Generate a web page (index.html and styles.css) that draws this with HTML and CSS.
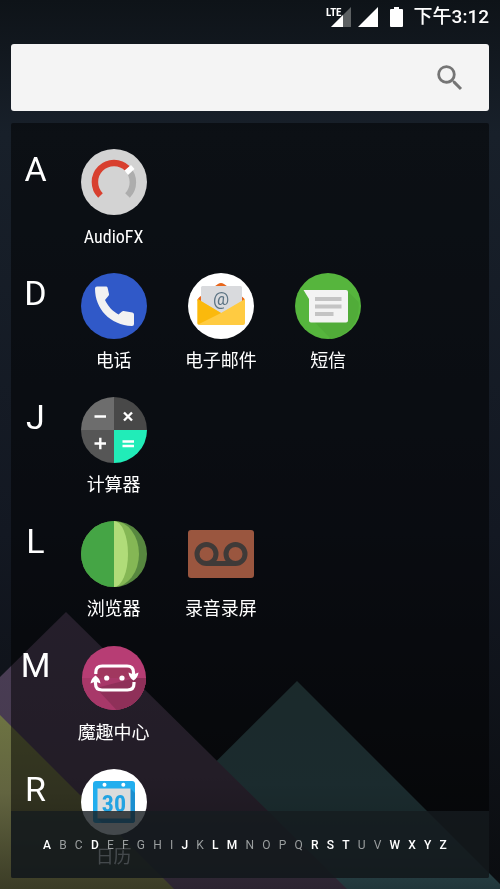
FILE: index.html
```
<!DOCTYPE html>
<html lang="zh-CN">
<head>
    <meta charset="UTF-8">
    <meta name="viewport" content="width=device-width, initial-scale=1">
    <title>应用列表</title>
    <link rel="stylesheet" href="styles.css">
</head>
<body>

<!-- 壁纸 -->
<svg class="wallpaper" viewBox="0 0 500 889" preserveAspectRatio="none" aria-hidden="true">
    <defs>
        <linearGradient id="sky" x1="0" y1="0" x2="0" y2="1">
            <stop offset="0" stop-color="#0e1318"/>
            <stop offset=".15" stop-color="#18202a"/>
            <stop offset=".6" stop-color="#131822"/>
            <stop offset="1" stop-color="#0b0d10"/>
        </linearGradient>
        <linearGradient id="teal" x1="0" y1="0" x2="0" y2="1">
            <stop offset="0" stop-color="#365457"/>
            <stop offset=".5" stop-color="#36565c"/>
            <stop offset=".8" stop-color="#2e4a4e"/>
            <stop offset="1" stop-color="#21363a"/>
        </linearGradient>
        <linearGradient id="purple" x1="0" y1="0" x2="0" y2="1">
            <stop offset="0" stop-color="#4a3d56"/>
            <stop offset=".6" stop-color="#463a4e"/>
            <stop offset="1" stop-color="#2c2431"/>
        </linearGradient>
        <linearGradient id="olive" x1="0" y1="0" x2="0" y2="1">
            <stop offset="0" stop-color="#6d7342"/>
            <stop offset=".45" stop-color="#626440"/>
            <stop offset="1" stop-color="#3b3c26"/>
        </linearGradient>
    </defs>
    <rect width="500" height="889" fill="url(#sky)"/>
    <path d="M297 681L88 889H505Z" fill="url(#teal)"/>
    <path d="M66 612L-5 682V889H347Z" fill="url(#purple)"/>
    <path d="M0 715V889H174Z" fill="url(#olive)"/>
</svg>

<header class="status-bar">
    <svg class="signal-lte" width="26" height="20" viewBox="0 0 26 20" role="img" aria-label="LTE 信号">
        <path d="M25 0V20H5Z" fill="#5d6163"/>
        <path d="M17 8V20H5Z" fill="#fff"/>
        <path d="M0 0H14V10H0Z" fill="#0f1419"/>
        <text x="0" y="9" class="lte-text">LTE</text>
    </svg>
    <svg class="signal" width="20" height="20" viewBox="0 0 20 20" role="img" aria-label="信号">
        <path d="M20 0V20H0Z" fill="#fff"/>
    </svg>
    <svg class="battery" width="13" height="20" viewBox="0 0 13 20" role="img" aria-label="电池">
        <path d="M4 0h5v2h3q1 0 1 1v16q0 1-1 1H1q-1 0-1-1V3q0-1 1-1h3z" fill="#fff"/>
    </svg>
    <time class="clock">下午3:12</time>
</header>

<form class="search" role="search">
    <input type="text" class="search-input" aria-label="搜索应用">
    <button type="button" class="search-button" aria-label="搜索">
        <svg width="34" height="34" viewBox="0 0 24 24" fill="#757575">
            <path d="M15.5 14h-.79l-.28-.27A6.47 6.47 0 0 0 16 9.5 6.5 6.5 0 1 0 9.500 16c1.610 0 3.090-.59 4.230-1.570l.27.28v.79l5 4.990L20.490 19l-4.990-5zm-6 0C7.010 14 5 11.990 5 9.500S7.010 5 9.500 5 14 7.010 14 9.500 11.990 14 9.500 14z"/>
        </svg>
    </button>
</form>

<main class="drawer">
    <div class="app-list">

        <section class="row">
            <h2 class="letter">A</h2>
            <a class="app" href="#audiofx">
                <svg class="icon" viewBox="0 0 66 66" fill="none">
                    <circle cx="33" cy="33" r="33" fill="#d3d3d3"/>
                    <path d="M46.500 20A19 19 0 0 1 46.500 46.500" stroke="#adadad" stroke-width="6.500"/>
                    <path d="M19.500 46.500A19 19 0 0 1 46.500 19.500" stroke="#d8402f" stroke-width="6.500"/>
                    <path d="M43.500 21.500l6.500-5.500 3.500 4-6.500 6z" fill="#fff"/>
                </svg>
                <span class="label">AudioFX</span>
            </a>
        </section>

        <section class="row">
            <h2 class="letter">D</h2>
            <a class="app" href="#phone">
                <svg class="icon" viewBox="0 0 66 66">
                    <circle cx="33" cy="33" r="33" fill="#3059c8"/>
                    <path d="M14 15.500q0-2 2-2h9q1.300 0 1.600 1.300L28 21q.2 1-.5 1.800L24 27C27 33 31 38 37.500 41.500L41 38.500q.7-.6 1.600-.4l8.800 1.400q1.600.3 1.600 2V51q0 2-2 2C29 52 14 36 14 15.500Z" fill="#f2f2f2"/>
                </svg>
                <span class="label">电话</span>
            </a>
            <a class="app" href="#email">
                <svg class="icon" viewBox="0 0 66 66">
                    <circle cx="33" cy="33" r="33" fill="#fff"/>
                    <path d="M9.500 28q0-2.500 2-4L30 11q3-2 6 0l18.500 13q2.500 1.500 2.500 4z" fill="#e8661b"/>
                    <path d="M13 14.500q0-1.500 1.500-1.500h38q1.500 0 1.500 1.500V45H13z" fill="#d9dadd"/>
                    <text x="33" y="32" class="at-sign">@</text>
                    <path d="M9.500 26L33 40 57 26v24q0 2-2 2H11.500q-2 0-2-2z" fill="#ffcb41"/>
                    <path d="M9.500 26L33 40 10 51.500q-.5-.5-.5-1.500z" fill="#fbb90c"/>
                </svg>
                <span class="label">电子邮件</span>
            </a>
            <a class="app" href="#sms">
                <svg class="icon" viewBox="0 0 66 66">
                    <circle cx="33" cy="33" r="33" fill="#56b53d"/>
                    <path d="M52.500 18l11 11A33 33 0 0 1 36 65.900L20 49.500z" fill="#51ac39"/>
                    <path d="M8.500 17H51q2 0 2 2v28.500q0 2-2 2H16q-2 0-2-2V26z" fill="#f3f3f3"/>
                    <path d="M20 24h26.500v4H20zM20 31.500h26.500v4H20zM20 39h18.500v4H20z" fill="#c4c4c4"/>
                </svg>
                <span class="label">短信</span>
            </a>
        </section>

        <section class="row">
            <h2 class="letter">J</h2>
            <a class="app" href="#calculator">
                <svg class="icon" viewBox="0 0 66 66" fill="none">
                    <path d="M33 33V0A33 33 0 0 0 0 33z" fill="#6d6d6d"/>
                    <path d="M33 33V0A33 33 0 0 1 66 33z" fill="#484848"/>
                    <path d="M33 33V66A33 33 0 0 1 0 33z" fill="#565656"/>
                    <path d="M33 33V66A33 33 0 0 0 66 33z" fill="#21ecb8"/>
                    <path d="M13.500 19.500H25M43 15.500l8 8M51 15.500l-8 8M13.500 46.500H25M19.300 40.800v11.500M41.500 44.500H53M41.500 49H53" stroke="#fff" stroke-width="2.400"/>
                </svg>
                <span class="label">计算器</span>
            </a>
        </section>

        <section class="row">
            <h2 class="letter">L</h2>
            <a class="app" href="#browser">
                <svg class="icon" viewBox="0 0 66 66">
                    <circle cx="33" cy="33" r="33" fill="#57873f"/>
                    <path d="M33 0A25 33 0 0 1 33 66z" fill="#85b755"/>
                    <path d="M33 0A14 33 0 0 1 33 66z" fill="#b0dc79"/>
                    <path d="M33 0A33 33 0 0 0 33 66z" fill="#45a545"/>
                </svg>
                <span class="label">浏览器</span>
            </a>
            <a class="app" href="#recorder">
                <svg class="icon" viewBox="0 0 66 66" fill="none">
                    <rect y="9" width="66" height="48" rx="3" fill="#9a563f"/>
                    <g stroke="#3f3a38" stroke-width="5">
                        <circle cx="18.500" cy="33" r="9.500"/>
                        <circle cx="47.500" cy="33" r="9.500"/>
                        <path d="M18.500 42.500h29"/>
                    </g>
                </svg>
                <span class="label">录音录屏</span>
            </a>
        </section>

        <section class="row">
            <h2 class="letter">M</h2>
            <a class="app" href="#moqu">
                <svg class="icon" viewBox="0 0 66 66" fill="none">
                    <circle cx="33" cy="33" r="32" fill="#b73d74"/>
                    <path d="M1 33A32 32 0 0 0 65 33z" fill="#a83869"/>
                    <path d="M15 43L35.500 64.900A32 32 0 0 0 65 33L54 33z" fill="#8f3059"/>
                    <path d="M16 23h35v10H16z" fill="#a1375f"/>
                    <path d="M14.800 29v-1.500q0-6.500 6.500-6.500H46q6.500 0 6.500 6.500V31M53 37v1.500q0 6.500-6.500 6.500H21q-6.500 0-6.500-6.500V36" stroke="#fff" stroke-width="3.200"/>
                    <path d="M47.500 27.500l5 2 5-2q-.5 5-5 8-4.500-3-5-8zM9.500 38.500q.5-5 5-8 4.500 3 5 8l-5-2z" fill="#fff"/>
                    <circle cx="25.700" cy="33" r="2.600" fill="#fff"/>
                    <circle cx="41" cy="33" r="2.600" fill="#fff"/>
                </svg>
                <span class="label">魔趣中心</span>
            </a>
        </section>

        <section class="row">
            <h2 class="letter">R</h2>
            <a class="app" href="#calendar">
                <svg class="icon" viewBox="0 0 66 66">
                    <circle cx="33" cy="33" r="33" fill="#fff"/>
                    <rect x="12" y="12" width="42" height="42" rx="3" fill="#22aeee"/>
                    <path d="M49.500 19.500L54 24v27q0 3-3 3H21l-4.500-4.500z" fill="#1b8fd0"/>
                    <path d="M16.500 19.500h33v30h-33z" fill="#dcdcdc"/>
                    <circle cx="23.500" cy="15.700" r="2" fill="#fff"/>
                    <circle cx="42.300" cy="15.700" r="2" fill="#fff"/>
                    <text x="33" y="43" class="day">30</text>
                </svg>
                <span class="label">日历</span>
            </a>
        </section>

    </div>

    <!-- 字母索引 -->
    <nav class="index-bar" aria-label="字母索引">
        <button class="has-apps">A</button>
        <button>B</button>
        <button>C</button>
        <button class="has-apps">D</button>
        <button>E</button>
        <button>F</button>
        <button>G</button>
        <button>H</button>
        <button>I</button>
        <button class="has-apps">J</button>
        <button>K</button>
        <button class="has-apps">L</button>
        <button class="has-apps">M</button>
        <button>N</button>
        <button>O</button>
        <button>P</button>
        <button>Q</button>
        <button class="has-apps">R</button>
        <button class="has-apps">S</button>
        <button class="has-apps">T</button>
        <button>U</button>
        <button>V</button>
        <button class="has-apps">W</button>
        <button class="has-apps">X</button>
        <button class="has-apps">Y</button>
        <button class="has-apps">Z</button>
    </nav>
</main>

</body>
</html>
```
FILE: styles.css
```
* {
    box-sizing: border-box;
}
body {
    margin: 0;
    height: 100vh;
    display: flex;
    flex-direction: column;
    overflow: hidden;
    background: #0e1318;
    color: #fff;
    font-family: Roboto, "Noto Sans CJK SC", sans-serif;
}
.wallpaper {
    position: fixed;
    inset: 0;
    width: 100%;
    height: 100%;
    z-index: -1;
}

/* 状态栏 */
.status-bar {
    display: flex;
    align-items: center;
    justify-content: flex-end;
    height: 34px;
    padding: 0 11px;
    flex-shrink: 0;
}
.signal {
    margin-left: 6px;
}
.battery {
    margin: 0 11px 0 12px;
}
.clock {
    font-size: 19px;
    line-height: 34px;
    font-weight: 500;
}
.signal-lte {
    overflow: visible;
}
.lte-text {
    font-family: "Roboto Condensed", Roboto, sans-serif;
    font-size: 11px;
    font-weight: bold;
    text-anchor: start;
    fill: #fff;
}

/* 搜索框 */
.search {
    display: flex;
    align-items: stretch;
    height: 67px;
    margin: 10px 11px 12px;
    flex-shrink: 0;
    background: #f4f4f4;
    border-radius: 3px;
}
.search-input {
    flex: 1;
    min-width: 0;
    padding: 0 20px;
    border: none;
    outline: none;
    background: none;
    font: inherit;
    font-size: 20px;
    color: #333;
}
.search-button {
    display: flex;
    align-items: center;
    padding: 0 22px;
    border: none;
    background: none;
}

/* 应用抽屉 */
.drawer {
    position: relative;
    flex: 1;
    min-height: 0;
    margin: 0 11px 11px;
    overflow: hidden;
    background: rgba(0, 0, 0, 0.5);
    border-radius: 2px;
}
.app-list {
    height: 100%;
    padding-top: 26px;
    overflow: hidden;
}
.row {
    display: grid;
    grid-template-columns: 49px repeat(4, 1fr);
    height: 124px;
}
.letter {
    margin: 0;
    font-size: 34px;
    line-height: 40px;
    font-weight: 400;
    text-align: center;
}
.app {
    display: flex;
    flex-direction: column;
    align-items: center;
    gap: 9px;
    color: #fff;
    text-decoration: none;
}
.icon {
    width: 66px;
    height: 66px;
}
.label {
    font-family: "Roboto Condensed", Roboto, "Noto Sans CJK SC", sans-serif;
    font-size: 18px;
    line-height: 26px;
    white-space: nowrap;
}
.at-sign {
    font-size: 18px;
    text-anchor: middle;
    fill: #5b7383;
}
.day {
    font-family: "Roboto Condensed", Roboto, sans-serif;
    font-size: 24px;
    font-weight: bold;
    text-anchor: middle;
    fill: #22a3e2;
}

.index-bar {
    position: absolute;
    left: 0;
    right: 0;
    bottom: 0;
    display: flex;
    align-items: center;
    justify-content: space-between;
    height: 67px;
    padding: 0 42px 0 32px;
    background: rgba(21, 27, 31, 0.8);
}
.index-bar button {
    padding: 0;
    border: none;
    background: none;
    color: #9a9e9f;
    font-family: Roboto, sans-serif;
    font-size: 12px;
    line-height: 16px;
}
.index-bar .has-apps {
    color: #fff;
    font-weight: 500;
}
```
